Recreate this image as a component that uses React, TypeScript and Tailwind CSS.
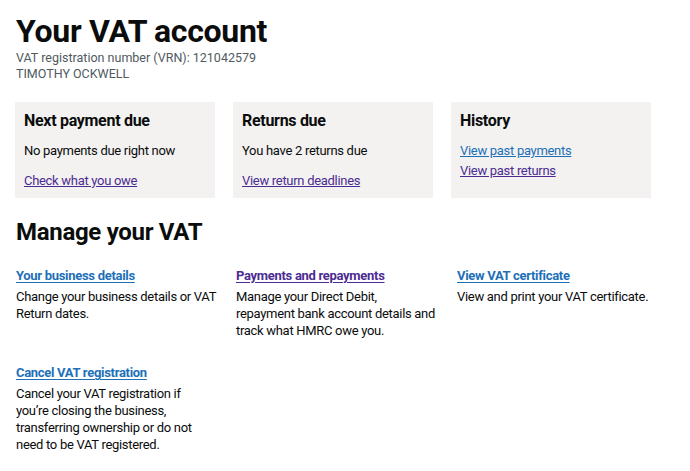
const font = "font-['Roboto',Arial,sans-serif]";

function SummaryCard({ title, children }: { title: string; children: React.ReactNode }) {
  return (
    <div className="w-[200px] h-[96px] bg-[#f3f2f1] px-[9px] pt-[8px]">
      <h2 className="text-[16px] font-bold leading-[22px] text-[#0b0c0c] mb-[10px]">{title}</h2>
      {children}
    </div>
  );
}

function ManageItem({
  title,
  visited,
  text,
  className,
}: {
  title: string;
  visited?: boolean;
  text: string;
  className: string;
}) {
  return (
    <div className={className}>
      <a
        href="#"
        className={
          "text-[13px] font-bold leading-[18px] tracking-[-0.3px] underline underline-offset-2 " +
          (visited ? "text-[#4c2c92]" : "text-[#1d70b8]")
        }
      >
        {title}
      </a>
      <p className="mt-[1px] text-[13px] leading-[17px] tracking-[-0.3px] text-[#0b0c0c]">{text}</p>
    </div>
  );
}

export default function App() {
  return (
    <div className={`${font} bg-white min-h-screen px-4 pt-[13px] text-[#0b0c0c]`}>
      <h1 className="text-[32px] font-bold leading-[36px] tracking-[-0.3px]">Your VAT account</h1>
      <p className="text-[12.5px] leading-[16px] text-[#505a5f] mt-[1px]">VAT registration number (VRN): 121042579</p>
      <p className="text-[12.5px] leading-[16px] text-[#505a5f]">TIMOTHY OCKWELL</p>

      <div className="flex gap-[18px] mt-[20px] -ml-px text-[13px] leading-[17px] tracking-[-0.3px]">
        <SummaryCard title="Next payment due">
          <p className="mt-[1px]">No payments due right now</p>
          <a href="#" className="block mt-[13px] underline text-[#4c2c92]">
            Check what you owe
          </a>
        </SummaryCard>
        <SummaryCard title="Returns due">
          <p className="mt-[1px]">You have 2 returns due</p>
          <a href="#" className="block mt-[13px] underline text-[#4c2c92]">
            View return deadlines
          </a>
        </SummaryCard>
        <SummaryCard title="History">
          <a href="#" className="block mt-[1px] underline text-[#1d70b8]">
            View past payments
          </a>
          <a href="#" className="block mt-[3px] underline text-[#4c2c92]">
            View past returns
          </a>
        </SummaryCard>
      </div>

      <h2 className="mt-[20px] text-[24px] font-bold leading-[28px] tracking-[-0.3px]">Manage your VAT</h2>

      <div className="mt-[17px] grid grid-cols-[220px_221px_201px] gap-y-[21px]">
        <ManageItem
          className="w-[218px]"
          title="Your business details"
          text="Change your business details or VAT Return dates."
        />
        <ManageItem
          className="w-[201px]"
          title="Payments and repayments"
          visited
          text="Manage your Direct Debit, repayment bank account details and track what HMRC owe you."
        />
        <ManageItem className="w-[201px]" title="View VAT certificate" text="View and print your VAT certificate." />
        <ManageItem
          className="w-[196px]"
          title="Cancel VAT registration"
          text="Cancel your VAT registration if you’re closing the business, transferring ownership or do not need to be VAT registered."
        />
      </div>
    </div>
  );
}
